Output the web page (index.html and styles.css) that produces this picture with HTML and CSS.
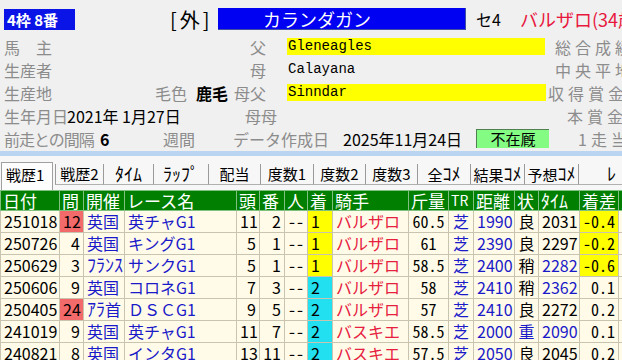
FILE: index.html
```html
<!DOCTYPE html>
<html lang="ja">
    <head>
        <meta charset="utf-8" />
        <title>カランダガン 戦歴</title>
        <link rel="stylesheet" href="styles.css">
    </head>
    <body>
        <div class="info">
            <div class="row head">
                <span class="waku">4枠 8番</span>
                <span class="gai">[外]</span>
                <span class="bamei">カランダガン</span>
                <span class="sei">セ4</span>
                <span class="jockey">バルザロ(34歳)</span>
            </div>
            <div class="row">
                <span class="lb owner">馬　主</span>
                <span class="lb parent">父</span>
                <span class="pedigree mark">Gleneagles</span>
                <span class="lb side">総合成績</span>
            </div>
            <div class="row">
                <span class="lb owner">生産者</span>
                <span class="lb parent">母</span>
                <span class="pedigree">Calayana</span>
                <span class="lb side">中央平地</span>
            </div>
            <div class="row">
                <span class="lb place">生産地</span>
                <span class="lb color">毛色</span>
                <span class="hair">鹿毛</span>
                <span class="lb bms">母父</span>
                <span class="pedigree mark short">Sinndar</span>
                <span class="lb side">収得賞金</span>
            </div>
            <div class="row">
                <span class="lb birth">生年月日</span>
                <span class="val birthday">2021年 1月27日</span>
                <span class="lb dam2">母母</span>
                <span class="lb side">本賞金</span>
            </div>
            <div class="row">
                <span class="lb interval">前走との間隔</span>
                <span class="val weeks">6</span>
                <span class="lb unit">週間</span>
                <span class="lb made">データ作成日</span>
                <span class="val madeday">2025年11月24日</span>
                <span class="zaikyu">不在厩</span>
                <span class="lb side">1走当</span>
            </div>
        </div>
        <div class="band"></div>
        <div class="tabs">
            <div class="tab active">戦歴1</div>
            <div class="tab">戦歴2</div>
            <div class="tab"><span class="hk">ﾀｲﾑ</span></div>
            <div class="tab"><span class="hk">ﾗｯﾌﾟ</span></div>
            <div class="tab">配当</div>
            <div class="tab">度数1</div>
            <div class="tab">度数2</div>
            <div class="tab">度数3</div>
            <div class="tab">全<span class="hk">ｺﾒ</span></div>
            <div class="tab">結果<span class="hk">ｺﾒ</span></div>
            <div class="tab">予想<span class="hk">ｺﾒ</span></div>
            <div class="tab last"><span class="hk">ﾚ</span></div>
        </div>
        <table class="race">
            <colgroup>
                <col style="width:59px"><col style="width:24px"><col style="width:41px"><col style="width:112px">
                <col style="width:23px"><col style="width:25px"><col style="width:23px"><col style="width:25px">
                <col style="width:76px"><col style="width:40px"><col style="width:25px"><col style="width:41px">
                <col style="width:24px"><col style="width:41px"><col style="width:39px"><col style="width:60px">
            </colgroup>
            <thead>
                <tr>
                    <th>日付</th><th>間</th><th>開催</th><th>レース名</th><th>頭</th><th>番</th><th>人</th><th>着</th>
                    <th>騎手</th><th>斤量</th><th class="tr">TR</th><th>距離</th><th>状</th><th><span class="hk">ﾀｲﾑ</span></th><th>着差</th><th>賞金</th>
                </tr>
            </thead>
            <tbody>
                <tr>
                    <td>251018</td><td class="r bad">12</td><td class="blue">英国</td><td class="blue">英チャG1</td>
                    <td class="r">11</td><td class="r">2</td><td class="c mono">--</td><td class="win">1</td>
                    <td class="red">バルザロ</td><td class="c mono">60.5</td><td class="c blue">芝</td><td class="blue">1990</td>
                    <td class="c">良</td><td>2031</td><td class="r mono hl">-0.4</td><td></td>
                </tr>
                <tr>
                    <td>250726</td><td class="r">4</td><td class="blue">英国</td><td class="blue">キングG1</td>
                    <td class="r">5</td><td class="r">1</td><td class="c mono">--</td><td class="win">1</td>
                    <td class="red">バルザロ</td><td class="c mono">61</td><td class="c blue">芝</td><td class="blue">2390</td>
                    <td class="c">良</td><td>2297</td><td class="r mono hl">-0.2</td><td></td>
                </tr>
                <tr>
                    <td>250629</td><td class="r">3</td><td class="blue"><span class="hk">ﾌﾗﾝｽ</span></td><td class="blue">サンクG1</td>
                    <td class="r">5</td><td class="r">1</td><td class="c mono">--</td><td class="win">1</td>
                    <td class="red">バルザロ</td><td class="c mono">58.5</td><td class="c blue">芝</td><td class="blue">2400</td>
                    <td class="c">稍</td><td class="blue">2282</td><td class="r mono hl">-0.6</td><td></td>
                </tr>
                <tr>
                    <td>250606</td><td class="r">9</td><td class="blue">英国</td><td class="blue">コロネG1</td>
                    <td class="r">7</td><td class="r">3</td><td class="c mono">--</td><td class="second">2</td>
                    <td class="red">バルザロ</td><td class="c mono">58</td><td class="c blue">芝</td><td class="blue">2410</td>
                    <td class="c">稍</td><td class="blue">2362</td><td class="r mono">0.1</td><td></td>
                </tr>
                <tr>
                    <td>250405</td><td class="r bad">24</td><td class="blue"><span class="hk">ｱﾗ</span>首</td><td class="blue">ＤＳＣG1</td>
                    <td class="r">9</td><td class="r">5</td><td class="c mono">--</td><td class="second">2</td>
                    <td class="red">バルザロ</td><td class="c mono">57</td><td class="c blue">芝</td><td class="blue">2410</td>
                    <td class="c">良</td><td>2272</td><td class="r mono">0.2</td><td></td>
                </tr>
                <tr>
                    <td>241019</td><td class="r">9</td><td class="blue">英国</td><td class="blue">英チャG1</td>
                    <td class="r">11</td><td class="r">7</td><td class="c mono">--</td><td class="second">2</td>
                    <td class="red">バスキエ</td><td class="c mono">58.5</td><td class="c blue">芝</td><td class="blue">2000</td>
                    <td class="c blue">重</td><td class="blue">2090</td><td class="r mono">0.1</td><td></td>
                </tr>
                <tr>
                    <td>240821</td><td class="r">8</td><td class="blue">英国</td><td class="blue">インタG1</td>
                    <td class="r">13</td><td class="r">11</td><td class="c mono">--</td><td class="second">2</td>
                    <td class="red">バスキエ</td><td class="c mono">57.5</td><td class="c blue">芝</td><td class="blue">2050</td>
                    <td class="c">良</td><td>2045</td><td class="r mono">0.2</td><td></td>
                </tr>
            </tbody>
        </table>
    </body>
</html>
```

FILE: styles.css
```css
body {
    margin: 0;
    width: 622px;
    height: 360px;
    overflow: hidden;
    background: #f0f0f0;
    font-family: "Noto Sans CJK JP", sans-serif;
    font-size: 16px;
    color: #000;
}
.hk {
    font-size: 18px;
    line-height: 1;
}
.info {
    padding-top: 8px;
}
.row {
    display: flex;
    align-items: center;
    height: 23px;
    padding-left: 4px;
    white-space: nowrap;
}
.row > span {
    flex-shrink: 0;
}
.row.head {
    height: 22px;
    margin-bottom: 5px;
}
.waku {
    width: 71px;
    height: 21px;
    line-height: 21px;
    box-sizing: border-box;
    padding-left: 3px;
    margin-right: 95px;
    background: #0a14e6;
    color: white;
    font-weight: bold;
    font-size: 15px;
}
.gai {
    width: 48px;
    font-size: 20px;
    letter-spacing: 3px;
}
.bamei {
    width: 248px;
    height: 22px;
    line-height: 22px;
    box-sizing: border-box;
    padding-left: 45px;
    margin-right: 10px;
    background: #0000f2;
    border-right: 1px solid #4050a0;
    border-bottom: 1px solid #4050a0;
    color: white;
    font-size: 18px;
}
.sei {
    width: 44px;
}
.jockey {
    color: #e8173d;
    font-size: 18px;
}
.lb {
    color: #8c8c8c;
}
.side {
    letter-spacing: 4px;
}
.owner {
    width: 246px;
}
.parent {
    width: 37px;
}
.pedigree {
    width: 268px;
    height: 17px;
    line-height: 17px;
    box-sizing: border-box;
    padding-left: 1px;
    font-family: "Liberation Mono", monospace;
    font-size: 14px;
}
.pedigree.mark {
    width: 258px;
    margin-right: 10px;
    background: #ffff00;
}
.pedigree.mark.short {
    width: 259px;
    margin-right: 2px;
}
.place {
    width: 151px;
}
.color {
    width: 41px;
}
.hair {
    width: 38px;
    font-weight: bold;
}
.bms {
    width: 53px;
}
.birth {
    width: 63px;
}
.birthday {
    width: 178px;
}
.dam2 {
    width: 322px;
}
.interval {
    width: 96px;
    letter-spacing: -1px;
}
.weeks {
    width: 63px;
    font-weight: bold;
}
.unit {
    width: 70px;
}
.made {
    width: 110px;
}
.madeday {
    width: 133px;
}
.zaikyu {
    width: 73px;
    height: 19px;
    line-height: 18px;
    box-sizing: border-box;
    margin-right: 29px;
    background: #84fc84;
    border-left: 1px solid #508050;
    border-top: 1px solid #508050;
    text-align: center;
    font-size: 15px;
}
.band {
    height: 5px;
    margin-top: 1px;
    background: #b9d5f2;
}
.tabs {
    display: grid;
    grid-template-columns: 55px 48px 50px 55px 52px 53px 52px 52px 53px 54px 54px 1fr;
    align-items: end;
    height: 34px;
    background: #f7f7f7;
    font-size: 15px;
    white-space: nowrap;
}
.tab {
    height: 21px;
    line-height: 20px;
    margin-bottom: 5px;
    box-sizing: border-box;
    border-left: 1px solid #9a9a9a;
    border-bottom: 1px solid #b0b0b0;
    text-align: center;
}
.tab.active {
    width: 52px;
    height: 28px;
    line-height: 24px;
    margin: 0 0 0 1px;
    padding-left: 4px;
    border: 1px solid #a0a0a0;
    border-bottom: none;
    background: #fdfdfd;
    text-align: left;
}
.tab.last {
    padding-left: 28px;
    text-align: left;
}
.race {
    border-collapse: collapse;
    table-layout: fixed;
    width: 678px;
}
.race th {
    height: 19px;
    padding: 0 2px;
    background: #007f00;
    border: 1px solid #80c080;
    color: white;
    font-weight: normal;
    font-size: 17px;
    line-height: 19px;
    text-align: left;
    white-space: nowrap;
    overflow: hidden;
}
.race th.tr {
    font-size: 14px;
}
.race td {
    height: 21px;
    padding: 0 3px;
    background: #fffbe8;
    border: 1px solid #c8c4b0;
    line-height: 21px;
    white-space: nowrap;
    overflow: hidden;
}
.race td.r {
    text-align: right;
}
.race td.c {
    text-align: center;
}
.race td.mono {
    font-feature-settings: "hwid" 1;
}
.race .blue {
    color: #1a1ac8;
}
.race .red {
    color: #e6203e;
}
.race td.bad {
    background: #f26a6a;
}
.race td.win {
    background: #ffff00;
}
.race td.second {
    background: #22e0f0;
}
.race td.hl {
    background: #ffff00;
}
```
